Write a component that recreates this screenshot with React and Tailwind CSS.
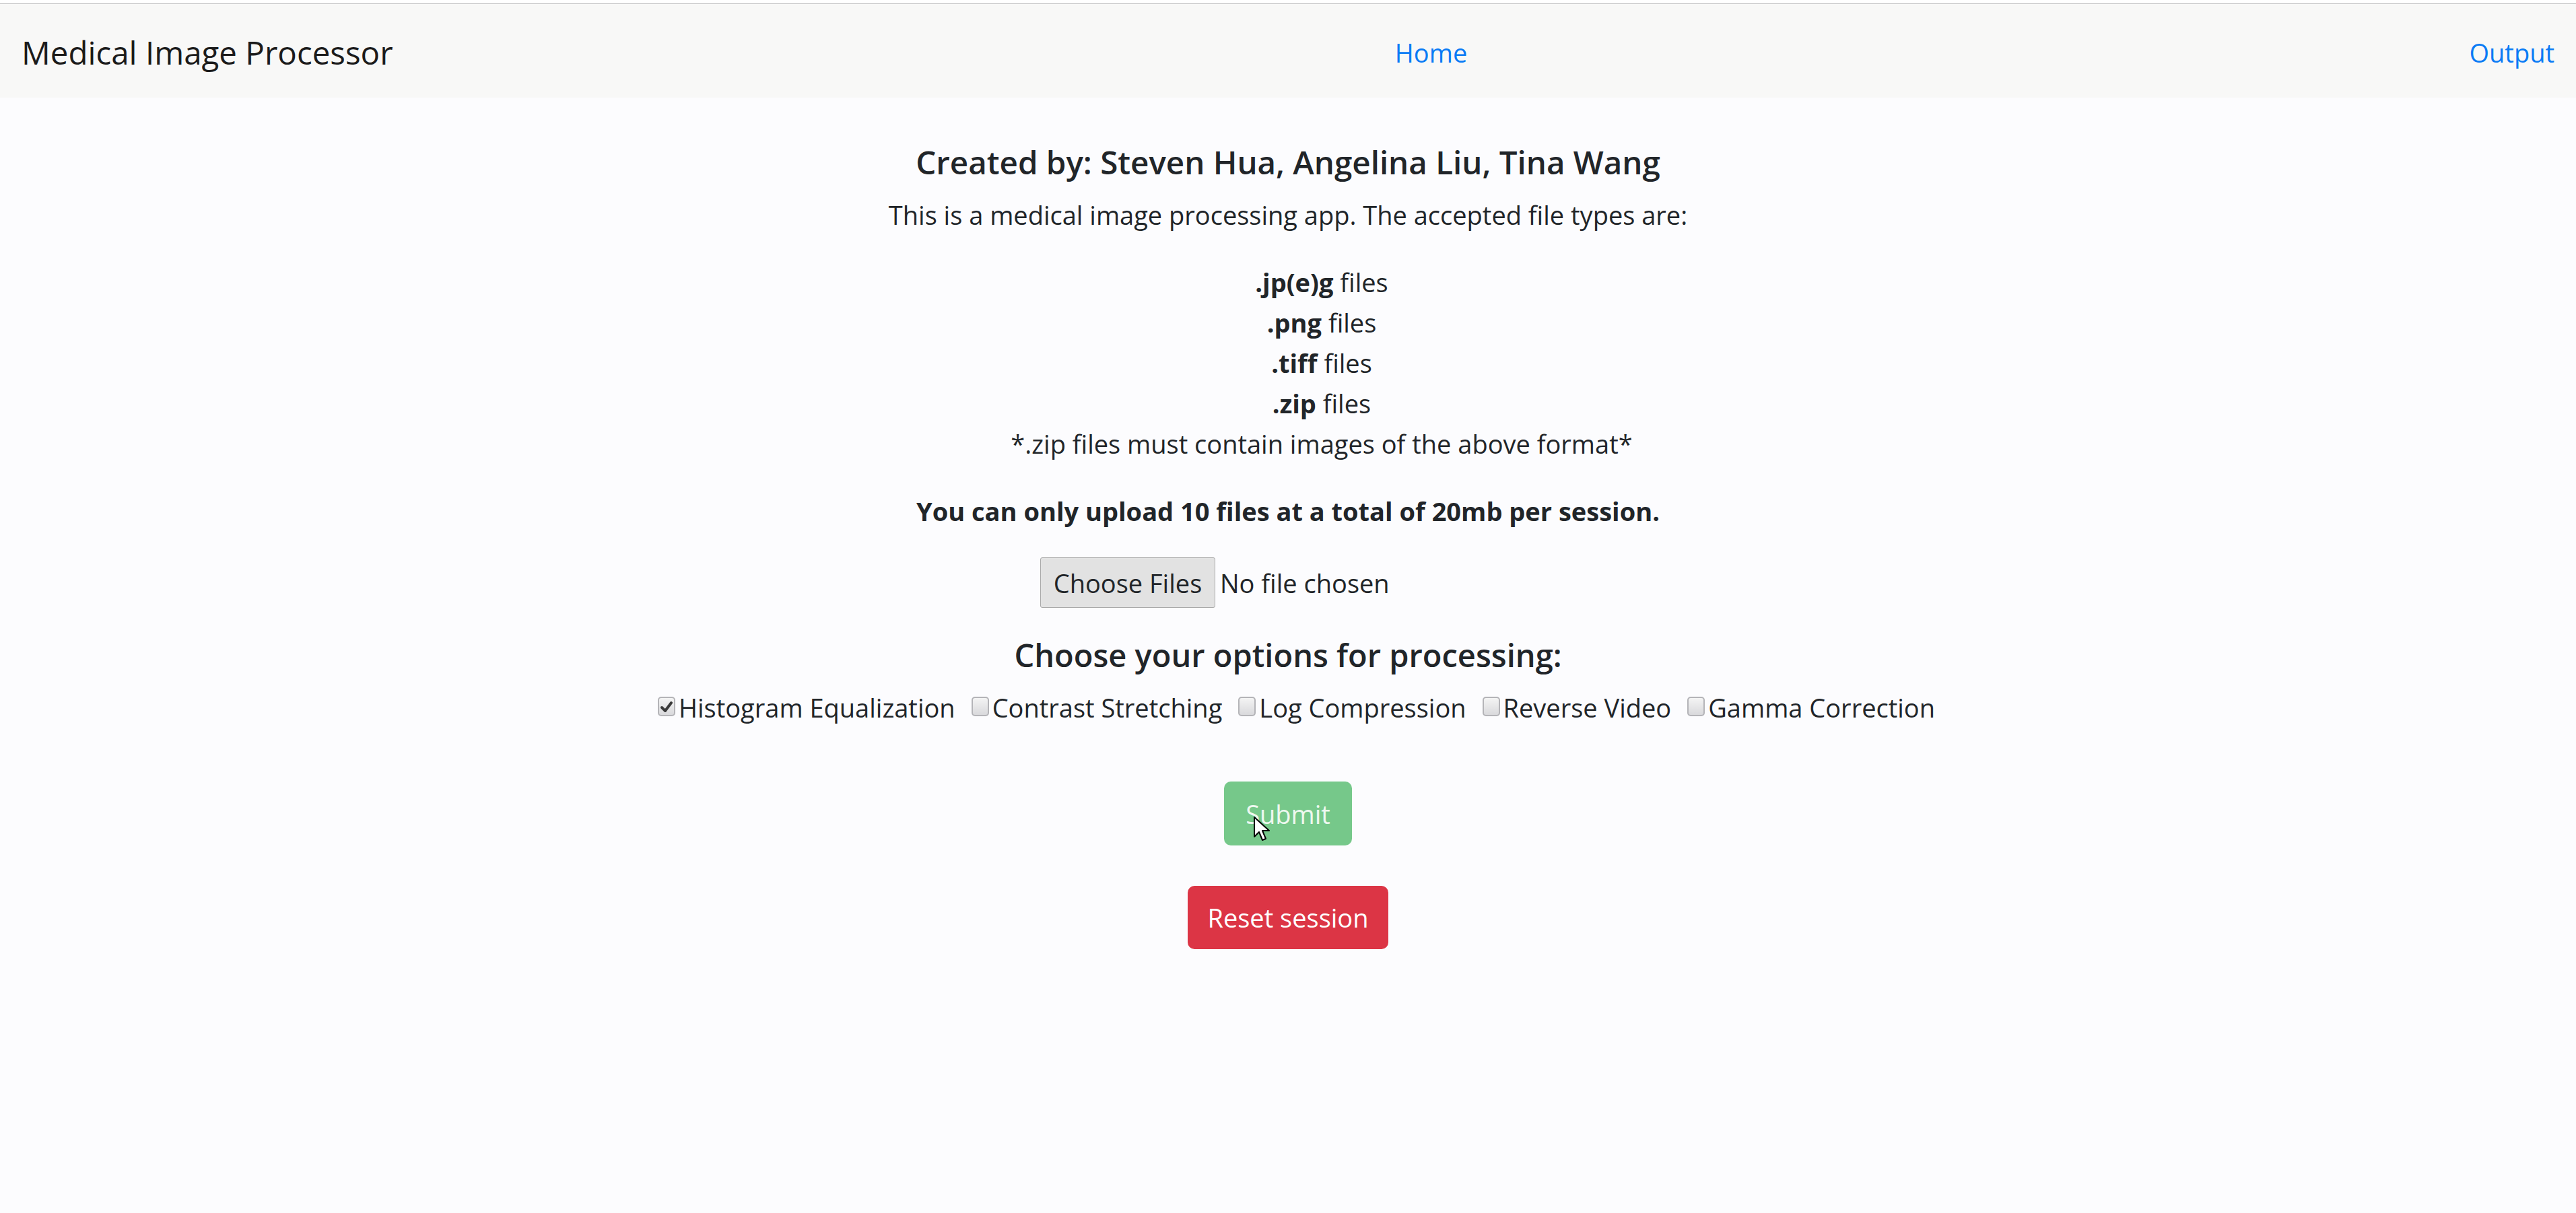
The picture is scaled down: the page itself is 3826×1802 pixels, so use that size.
import { useState } from "react";

const OPTIONS = [
  { label: "Histogram Equalization", checked: true },
  { label: "Contrast Stretching", checked: false },
  { label: "Log Compression", checked: false },
  { label: "Reverse Video", checked: false },
  { label: "Gamma Correction", checked: false },
];

const TYPES = [".jp(e)g", ".png", ".tiff", ".zip"];

function Box({ checked, onClick }) {
  return (
    <span
      onClick={onClick}
      className="w-[26px] h-[29px] mt-[14px] rounded-[5px] border-2 border-[#b4b4b8] bg-gradient-to-b from-[#f4f4f4] to-[#d9d9dc] flex items-center justify-center shrink-0"
    >
      {checked && (
        <svg width="20" height="20" viewBox="0 0 20 20">
          <path d="M3 11 L8 16 L17 4" fill="none" stroke="#3a3a3a" strokeWidth="4" strokeLinecap="round" strokeLinejoin="round" />
        </svg>
      )}
    </span>
  );
}

export default function App() {
  const [opts, setOpts] = useState(OPTIONS);

  return (
    <div className="min-h-[1802px] w-full bg-[#fcfcfe] text-[#212529] text-[38px] leading-[60px]"
      style={{ fontFamily: '"Open Sans", "Noto Sans", sans-serif' }}>
      <div className="h-[5px] bg-white" />
      <nav className="h-[140px] border-t border-[#c4c4c4] bg-[#f8f8f7] flex items-center justify-between px-[32px] pt-[4px]">
        <span className="text-[47.5px] text-[#1b1b1b]">Medical Image Processor</span>
        <a className="text-[#0a7bf5]">Home</a>
        <a className="text-[#0a7bf5]">Output</a>
      </nav>

      <main className="flex flex-col items-center text-center">
        {/* header text */}
        <h5 className="mt-[68px] text-[47.5px] leading-[56px] font-semibold">
          Created by: Steven Hua, Angelina Liu, Tina Wang
        </h5>
        <p className="mt-[20px] mb-[40px]">
          This is a medical image processing app. The accepted file types are:
        </p>

        {/* file type list, ul padding pushes it right */}
        <div className="w-full pl-[100px]">
          {TYPES.map((t) => (
            <div key={t}>
              <b className="font-bold">{t}</b> files
            </div>
          ))}
          <div>*.zip files must contain images of the above format*</div>
        </div>

        <p className="mt-[40px] font-bold">You can only upload 10 files at a total of 20mb per session.</p>

        {/* file input */}
        <div className="mt-[39px] w-[736px] flex items-center text-left">
          <span className="h-[75px] w-[260px] border border-[#a9a9a9] rounded-[3px] bg-[#e2e2e2] flex items-center justify-center">
            Choose Files
          </span>
          <span className="ml-[7px]">No file chosen</span>
        </div>

        <h4 className="mt-[42px] text-[47px] leading-[56px] font-semibold">
          Choose your options for processing:
        </h4>

        <div className="mt-[20px] pl-[25px] flex justify-center items-start gap-[24px]">
          {opts.map((o, i) => (
            <label key={o.label} className="flex items-start gap-[5px]">
              <Box
                checked={o.checked}
                onClick={() => setOpts(opts.map((x, j) => (j === i ? { ...x, checked: !x.checked } : x)))}
              />
              <span>{o.label}</span>
            </label>
          ))}
        </div>

        <button className="relative mt-[80px] w-[190px] h-[95px] rounded-[10px] bg-[#76c88a] text-[#eef8f0] flex items-center justify-center">
          Submit
          {/* mouse cursor */}
          <svg className="absolute left-[44px] top-[52px]" width="26" height="40" viewBox="0 0 26 40">
            <path d="M1 1 L1 30 L8 23 L13 35 L18 33 L13 21 L23 21 Z" fill="white" stroke="black" strokeWidth="2" strokeLinejoin="round" />
          </svg>
        </button>

        <button className="mt-[60px] w-[298px] h-[94px] rounded-[10px] bg-[#dc3545] text-white flex items-center justify-center">
          Reset session
        </button>
      </main>
    </div>
  );
}
